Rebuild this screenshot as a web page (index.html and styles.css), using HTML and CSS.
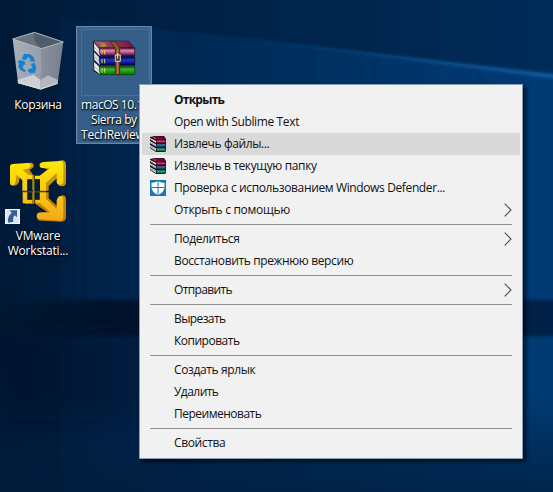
FILE: index.html
```
<!DOCTYPE html>
<html lang="ru">
<head>
<meta charset="utf-8">
<title>Рабочий стол</title>
<link rel="stylesheet" href="styles.css">
</head>
<body>
<main class="desktop">
  <svg class="wallpaper" viewBox="0 0 553 492" preserveAspectRatio="none">
    <defs>
      <linearGradient id="base" x1="0" y1="0" x2="1" y2="0">
        <stop offset="0" stop-color="#001a38"/><stop offset=".25" stop-color="#001f42"/><stop offset=".65" stop-color="#00264e"/><stop offset="1" stop-color="#002c58"/>
      </linearGradient>
      <linearGradient id="glow" x1="0" y1="0" x2="1" y2="0">
        <stop offset="0" stop-color="#003a74" stop-opacity=".1"/><stop offset=".5" stop-color="#003a74" stop-opacity=".5"/><stop offset="1" stop-color="#003f7c" stop-opacity=".8"/>
      </linearGradient>
      <linearGradient id="shade" x1="0" y1="0" x2="0" y2="1">
        <stop offset=".8" stop-color="#001c3c" stop-opacity="0"/><stop offset="1" stop-color="#001c3c" stop-opacity=".7"/>
      </linearGradient>
      <linearGradient id="ray" x1="0" y1="0" x2="1" y2="0">
        <stop offset="0" stop-color="#0b4f90" stop-opacity="0"/><stop offset=".4" stop-color="#0b4f90" stop-opacity=".65"/><stop offset="1" stop-color="#0c5aa2"/>
      </linearGradient>
      <linearGradient id="band" x1="0" y1="0" x2="1" y2="0">
        <stop offset="0" stop-color="#00122c" stop-opacity=".3"/><stop offset=".2" stop-color="#000c24" stop-opacity=".8"/><stop offset=".9" stop-color="#001838" stop-opacity=".8"/><stop offset="1" stop-color="#001c40" stop-opacity=".8"/>
      </linearGradient>
      <filter id="soft" x="-20%" y="-50%" width="140%" height="200%"><feGaussianBlur stdDeviation="1.6"/></filter>
      <filter id="wide" x="-20%" y="-50%" width="140%" height="200%"><feGaussianBlur stdDeviation="12"/></filter>
    </defs>
    <rect width="553" height="492" fill="url(#base)"/>
    <path d="M60 17L563 78V500H60Z" fill="url(#glow)" filter="url(#soft)"/>
    <rect width="553" height="492" fill="url(#shade)"/>
    <path d="M130 25L563 75V80L400 59Z" fill="url(#ray)" filter="url(#soft)"/>
    <path d="M-10 300H563V336H-10Z" fill="url(#band)" filter="url(#soft)"/>
    <path d="M-20 325H145V420H0Z" fill="#001026" opacity=".4" filter="url(#wide)"/>
  </svg>

  <section class="shortcut bin">
    <svg class="art" viewBox="0 0 240 220">
      <defs>
        <linearGradient id="glassL" x2="1"><stop stop-color="#a9b0ba"/><stop offset="1" stop-color="#979ea9"/></linearGradient>
        <linearGradient id="glassR" x2="1"><stop stop-color="#89919d"/><stop offset="1" stop-color="#777f8c"/></linearGradient>
      </defs>
      <path d="M38 57L103 37L190 66L124 86Z" fill="#69727f"/>
      <path d="M103 37V64L124 86L190 66Z" fill="#515c6b"/>
      <path d="M38 57L124 86L122 209L54 188Z" fill="url(#glassL)"/>
      <path d="M124 86L190 66L173 191L122 209Z" fill="url(#glassR)"/>
      <path d="M53 179L100 164L122 180V208L54 190Z" fill="#cdd0d4"/>
      <path d="M122 180L144 166L174 180L172 191L122 208Z" fill="#b4b8be"/>
      <path d="M54 188L122 207L173 190" fill="none" stroke="#dee0e3" stroke-width="3"/>
      <path d="M38 57L103 37L190 66L124 86Z" fill="none" stroke="#c5cad0" stroke-width="2.5"/>
      <path d="M124 86L122 208" stroke="#a9afb8" stroke-width="1.5"/>
      <g fill="#1581cc">
        <path d="M65 116L72 102L90 103L101 112L105 126L87 123L92 119L84 110L78 121Z"/>
        <path d="M57 121L73 122L78 136L72 133L68 144L77 151L75 157L61 150L54 138L58 131L53 127Z"/>
        <path d="M93 132L104 128L109 145L104 159L94 158L93 163L82 151L94 143L95 148L98 147Z"/>
      </g>
    </svg>
    <p class="label">Корзина</p>
  </section>

  <section class="shortcut archive">
    <svg class="art" viewBox="0 0 228 204">
      <defs>
        <linearGradient id="purple" x2="0" y2="1"><stop stop-color="#74264b"/><stop offset=".35" stop-color="#d98bb9"/><stop offset=".6" stop-color="#a94c82"/><stop offset="1" stop-color="#3f0c29"/></linearGradient>
        <linearGradient id="blue" x2="0" y2="1"><stop stop-color="#000052"/><stop offset=".4" stop-color="#2236c8"/><stop offset="1" stop-color="#000064"/></linearGradient>
        <linearGradient id="green" x2="0" y2="1"><stop stop-color="#063f06"/><stop offset=".4" stop-color="#36b428"/><stop offset="1" stop-color="#087108"/></linearGradient>
        <linearGradient id="cover" x2="1"><stop stop-color="#a15b76"/><stop offset="1" stop-color="#6b163c"/></linearGradient>
      </defs>
      <g transform="translate(-18 -18)">
        <path d="M69 64L92 88V166L71 153Z" fill="#151519"/>
        <path d="M72 68L90 90V109L73 91Z" fill="#e9e9ee"/>
        <path d="M72 96L90 114V136L73 120Z" fill="#d9dbe3"/>
        <path d="M72 126L90 142V163L73 150Z" fill="#e9e9ef"/>
        <path d="M74 82L89 100M74 111L89 128M74 140L89 156" stroke="#9aa1ab" stroke-width="1.5"/>
        <path d="M69 63H176L194 84H88Z" fill="url(#cover)" stroke="#37182a" stroke-width="2"/>
        <path d="M86 67L104 70L111 77L100 82L88 77L97 74Z" fill="#b68c28"/>
        <path d="M88 84H194V108H91Q87 97 88 84Z" fill="url(#purple)" stroke="#260719" stroke-width="2"/>
        <path d="M88 110H194V135H91Q87 124 88 110Z" fill="url(#blue)" stroke="#000032" stroke-width="2"/>
        <path d="M88 137H194V164H91Q87 151 88 137Z" fill="url(#green)" stroke="#023c03" stroke-width="2"/>
        <path d="M96 90V103M104 90V103M96 117V130M104 117V130M96 144V158M104 144V158" stroke="#dbd36b" stroke-width="3"/>
        <path d="M119 64H130Q143 69 149 83V164H136V88Q131 75 119 64Z" fill="#8d5727" stroke="#482a13" stroke-width="3"/>
        <path d="M143 88V161" stroke="#ba813f" stroke-width="3"/>
        <path d="M136 105H151V124H136Z" fill="#4c3b24" stroke="#d8d5c4" stroke-width="3"/>
        <path d="M143 100V116" stroke="#f5f1d9" stroke-width="3"/>
      </g>
    </svg>
    <p class="label"><span class="l1">macOS 10.12</span><br><span class="l2">Sierra by</span><br><span class="l3">TechReviews</span></p>
  </section>

  <section class="shortcut vmware">
    <svg class="art" viewBox="0 0 240 230">
      <defs>
        <linearGradient id="gold" gradientUnits="userSpaceOnUse" x1="0" y1="31" x2="0" y2="214"><stop stop-color="#fdea08"/><stop offset=".5" stop-color="#f8c90f"/><stop offset="1" stop-color="#f3a81c"/></linearGradient>
        <linearGradient id="depth" gradientUnits="userSpaceOnUse" x1="0" y1="31" x2="0" y2="216"><stop stop-color="#c7a108"/><stop offset="1" stop-color="#bd740b"/></linearGradient>
      </defs>
      <g fill="url(#depth)">
        <path d="M82 39L95 38Q102 40 101 48Q99 56 88 59L101 77V120H82V92L62 72L56 98Q50 108 36 108L50 68Z"/>
        <path d="M178 32L190 31Q197 33 198 42V98Q197 108 187 109L176 107L174 82L146 108V122H124V96L150 61L127 53Z"/>
        <path d="M68 127H101V161H75ZM106 127H146V145L171 168L174 147Q179 137 188 136Q197 137 198 146V205Q196 215 184 215L120 212Q108 208 112 197L144 188L106 161Z"/>
      </g>
      <g fill="url(#gold)">
        <path d="M30 49Q30 43 37 42L82 39Q93 39 92 48Q91 55 68 60L87 76H97V88H81V122H67V91L50 74L47 94Q46 104 37 106Q30 107 30 100Z"/>
        <path d="M119 42Q121 37 130 36L180 33Q190 33 190 42V95Q189 104 180 104Q170 104 170 95V68L138 99V122H120V88H105V77H119L150 53L127 54Q117 53 119 42Z"/>
        <path d="M68 127H81V150H96V160H68ZM106 127H138V146L170 177V153Q172 140 181 138Q190 138 190 146V203Q189 212 181 212L120 208Q110 207 110 197Q111 187 124 187H151L120 160H106V150H120V127Z"/>
      </g>
      <path d="M82 88H97V123H82ZM105 88H119V123H105ZM82 127H97V149H82ZM105 127H119V149H105Z" fill="#071d36"/>
      <path d="M67 125H139" stroke="#5a450f" stroke-width="3"/><path d="M101 76V161" stroke="#a38313" stroke-width="5"/>
      <path d="M15 177H60V222H15Z" fill="#f2f4f7"/><path d="M18 180H57V219H18Z" fill="#dfe5ee"/>
      <path d="M29 181H51V202L44 196Q38 201 40 215L25 218Q20 201 35 189Z" fill="#315f96"/>
    </svg>
    <p class="label">VMware<br>Workstati...</p>
  </section>

  <svg class="symbols" aria-hidden="true">
    <symbol id="books" viewBox="0 0 16 16">
      <path d="M0 1L5 0H14L16 3V15L15 16H6L0 12Z" fill="#1c1017"/>
      <path d="M0 2L6 5V7L0 3ZM0 5L6 8.5V10.5L0 7ZM0 9L6 12.5V15L0 11Z" fill="#f7f7f7"/>
      <path d="M0 3.5L6 7M0 6L6 9.7M0 10L6 13.7" stroke="#58505a" stroke-width=".5"/>
      <path d="M1.5 1.4L5 .4H13L15 3.4L6 3.8Z" fill="#780535"/><path d="M3 1.2L6.3 2L5 2.8Z" fill="#dd9837"/>
      <path d="M6.5 4.4H15.5V6.6H6.5Z" fill="#a90c50"/><path d="M7 5.2H15" stroke="#ea6299" stroke-width=".8"/>
      <path d="M6.5 8H15.5V10.8H6.5Z" fill="#164d78"/><path d="M7 9H15" stroke="#5589a9" stroke-width=".8"/>
      <path d="M6.5 12.2H15.5V15.2H6.5Z" fill="#087a4d"/><path d="M7 13.2H15" stroke="#55b98d" stroke-width=".8"/>
    </symbol>
    <symbol id="shield" viewBox="0 0 16 16">
      <path d="M0 0H16V16H0Z" fill="#1976b5"/>
      <path d="M8 1Q11 3 14.5 2.7V7Q14.5 12 8 15Q1.5 12 1.5 7V2.7Q5 3 8 1Z" fill="#fff"/>
      <path d="M8 1V15M1.5 7.5H14.5" stroke="#1976b5"/>
    </symbol>
    <symbol id="arrow" viewBox="0 0 8 14"><path d="M.7 .7L7 7L.7 13.3" fill="none" stroke="#4b4943" stroke-width="1.1"/></symbol>
  </svg>

  <nav class="menu">
    <div class="item"><b class="t01">Открыть</b></div>
    <div class="item"><span class="t02">Open with Sublime Text</span></div>
    <div class="item active"><svg class="icon"><use href="#books"/></svg><span class="t03">Извлечь файлы...</span></div>
    <div class="item"><svg class="icon"><use href="#books"/></svg><span class="t04">Извлечь в текущую папку</span></div>
    <div class="item"><svg class="icon"><use href="#shield"/></svg><span class="t05">Проверка с использованием Windows Defender...</span></div>
    <div class="item"><span class="t06">Открыть с помощью</span><svg class="arrow"><use href="#arrow"/></svg></div>
    <hr>
    <div class="item"><span class="t07">Поделиться</span><svg class="arrow"><use href="#arrow"/></svg></div>
    <div class="item"><span class="t08">Восстановить прежнюю версию</span></div>
    <hr>
    <div class="item"><span class="t09">Отправить</span><svg class="arrow"><use href="#arrow"/></svg></div>
    <hr>
    <div class="item"><span class="t10">Вырезать</span></div>
    <div class="item"><span class="t11">Копировать</span></div>
    <hr>
    <div class="item"><span class="t12">Создать ярлык</span></div>
    <div class="item"><span class="t13">Удалить</span></div>
    <div class="item"><span class="t14">Переименовать</span></div>
    <hr>
    <div class="item"><span class="t15">Свойства</span></div>
  </nav>
</main>
</body>
</html>
```
FILE: styles.css
```
* { box-sizing: border-box; }
body { margin: 0; overflow: hidden; font: 12px/15px "Open Sans", "Noto Sans", sans-serif; }
.desktop { position: relative; width: 553px; height: 492px; overflow: hidden; background: #00244c; }
.wallpaper { position: absolute; inset: 0; width: 100%; height: 100%; }
.symbols { display: none; }
.shortcut { position: absolute; width: 76px; }
.art { display: block; }
.label { margin: 0; color: #fff; text-align: center; white-space: nowrap; letter-spacing: -.3px; text-shadow: 1px 1px 2px #000, 0 1px 2px #000; }
.bin { left: 0; top: 20px; }
.bin .art { width: 80px; height: 73.33px; }
.bin .label { margin-top: 4px; }
.archive { left: 76px; top: 26px; height: 118px; border: 1px solid #6685a3; background: #355f88; box-shadow: inset 0 0 0 1px #41698f; }
.archive::before { content: ""; position: absolute; left: 4px; top: 2px; width: 67px; height: 65px; border: 1px solid #496f94; }
.archive .art { width: 76px; height: 68px; margin: -1px; position: relative; }
.archive .label { padding-left: 4px; margin-top: 4px; text-align: left; }
.archive .l1 { letter-spacing: -.45px; }
.archive .l2 { margin-left: 10px; letter-spacing: -.4px; }
.archive .l3 { letter-spacing: -.2px; }
.vmware { left: 0; top: 150px; }
.vmware .art { width: 80px; height: 76.67px; }
.vmware .label { margin-top: 1px; letter-spacing: -.2px; }
.menu { position: absolute; left: 139px; top: 84px; width: 384px; height: 375px; padding: 4px 2px; border: 1px solid #8ba0b5; background: #f1f1f1; color: #111; box-shadow: 3px 3px 4px rgba(0,0,0,.6); }
.item { height: 22px; display: grid; grid-template-columns: 32px 1fr 16px; align-items: center; line-height: 20px; letter-spacing: -.37px; }
.item span, .item b { grid-column: 2; grid-row: 1; justify-self: start; white-space: nowrap; }
.item .t01 { letter-spacing: -.75px; }
.item .t06 { letter-spacing: -.3px; }
.item .t09 { letter-spacing: -.65px; }
.item .t10 { letter-spacing: -.6px; }
.item .t11, .item .t14 { letter-spacing: -.5px; }
.item .t13 { letter-spacing: -.55px; }
.active { background: #d9d9d9; }
.icon { grid-column: 1; grid-row: 1; width: 16px; height: 16px; margin-left: 8px; }
.arrow { grid-column: 3; grid-row: 1; width: 8px; height: 14px; }
hr { height: 1px; margin: 3px 8px; border: 0; background: #919191; }
```
